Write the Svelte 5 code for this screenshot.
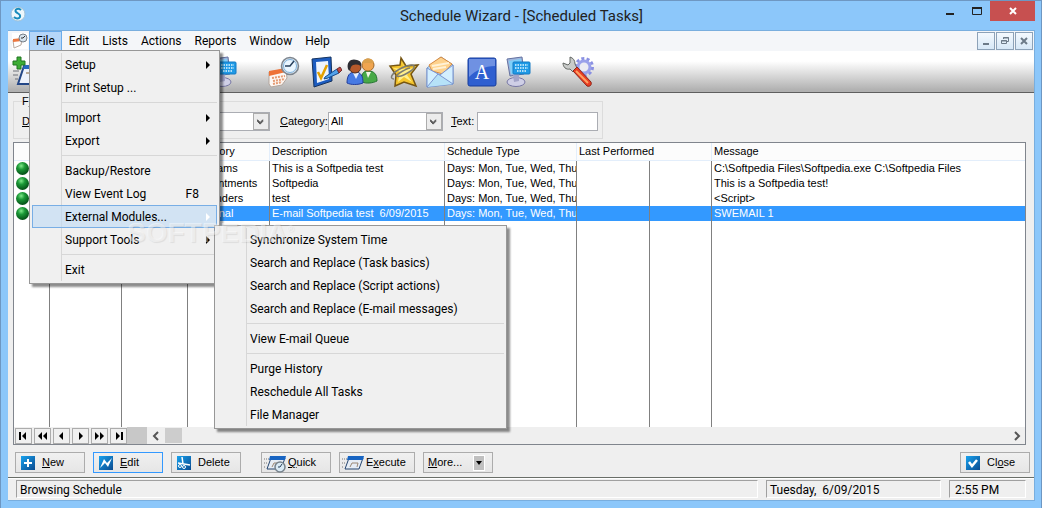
<script lang="ts">
  type MenuEntry = { label?: string; shortcut?: string; arrow?: boolean; open?: boolean; separator?: boolean };

  const menus = ['File', 'Edit', 'Lists', 'Actions', 'Reports', 'Window', 'Help'];

  const fileMenu: MenuEntry[] = [
    { label: 'Setup', arrow: true },
    { label: 'Print Setup ...' },
    { separator: true },
    { label: 'Import', arrow: true },
    { label: 'Export', arrow: true },
    { separator: true },
    { label: 'Backup/Restore' },
    { label: 'View Event Log', shortcut: 'F8' },
    { label: 'External Modules...', arrow: true, open: true },
    { label: 'Support Tools', arrow: true },
    { separator: true },
    { label: 'Exit' }
  ];

  const modulesMenu: MenuEntry[] = [
    { label: 'Synchronize System Time' },
    { label: 'Search and Replace (Task basics)' },
    { label: 'Search and Replace (Script actions)' },
    { label: 'Search and Replace (E-mail messages)' },
    { separator: true },
    { label: 'View E-mail Queue' },
    { separator: true },
    { label: 'Purge History' },
    { label: 'Reschedule All Tasks' },
    { label: 'File Manager' }
  ];

  const days = 'Days: Mon, Tue, Wed, Thu';
  const tasks = [
    { category: 'Programs', description: 'This is a Softpedia test', message: 'C:\\Softpedia Files\\Softpedia.exe C:\\Softpedia Files' },
    { category: 'Appointments', description: 'Softpedia', message: 'This is a Softpedia test!' },
    { category: 'Reminders', description: 'test', message: '<Script>' },
    { category: 'Personal', description: 'E-mail Softpedia test  6/09/2015', message: 'SWEMAIL 1' }
  ];

  // pairs of toolbar buttons, left to right
  const toolGroups = [['calendar'], ['check', 'people'], ['star', 'mail'], ['font', 'monitor']];

  const navPaths = [
    'M3 3h2v8H3zM10 3v8L6 7z',
    'M7 3v8L3 7zM12 3v8L8 7z',
    'M9 3v8L5 7z',
    'M6 3v8l4-4z',
    'M3 3v8l4-4zM8 3v8l4-4z',
    'M5 3v8l4-4zM10 3h2v8h-2z'
  ];

  let selected = $state(3);
  let category = $state('All');
  let text = $state('');
</script>

{#snippet icon(name: string)}
  <svg class="icon" viewBox="0 0 32 32" aria-hidden="true">
    {#if name === 'calendar'}
      <path d="M1 16l17-3 1 9-5 7-11 2-2-3z" fill="#fdf8f4" stroke="#b3a59c" />
      <path d="M1 15l17-3v4L1 20z" fill="#ee7338" />
      <path d="M4 22l13-2M5 25l12-2M5 28l9-2" stroke="#e59a72" stroke-width="2" stroke-dasharray="2 1" />
      <circle cx="22" cy="10" r="8.500" fill="#d5e0ea" stroke="#7d858e" stroke-width="1.500" />
      <circle cx="22" cy="10" r="6.500" fill="#eaf6ff" stroke="#7fb2dc" />
      <path d="M26 5l-4 5h-5" fill="none" stroke="#28405c" stroke-width="1.500" />
    {:else if name === 'check'}
      <path d="M2 3l19-2 1 24L4 31z" fill="#1c5cc0" stroke="#14325e" />
      <path d="M6 6l12-1 1 18L7 27z" fill="#eef4fd" />
      <path d="M8 16l3 6 6-13" fill="none" stroke="#e4a100" stroke-width="2.500" />
      <path d="M15 21l12-8 2 4-11 5-4 1z" fill="#53a2ea" stroke="#164a8e" />
      <path d="M27 13l3-2 2 3-3 3z" fill="#c84640" stroke="#71302e" />
    {:else if name === 'people'}
      <path d="M16 26c-1-8 1-11 6-11 6 0 9 3 9 10-4 2-10 3-15 1z" fill="#47a947" stroke="#257432" />
      <path d="M20 16l2 6 3-6z" fill="#f1f7e8" />
      <circle cx="22" cy="9" r="6" fill="#f0a550" stroke="#a0682c" />
      <path d="M16 8c1-7 11-7 12-1-4 1-8-1-12 1z" fill="#dba04c" />
      <path d="M1 27c0-8 3-11 8-11 6 0 8 4 8 11-5 2-12 2-16 0z" fill="#477ae3" stroke="#243e9b" />
      <path d="M7 17l3 6 3-6z" fill="#e6efff" />
      <circle cx="9" cy="11" r="6" fill="#b4592b" stroke="#54311f" />
      <path d="M2 13C0 5 6 2 11 4c4 1 5 4 4 6-4-2-8-2-10 1-1 3-1 5-3 2z" fill="#2c2c31" />
    {:else if name === 'star'}
      <path d="M13 2l5 8 12-1-7 9 5 12-12-4-9 4 1-11-6-9 10-1z" fill="#f5c52e" stroke="#765614" stroke-width="1.500" />
      <path d="M14 5l2 8-11-1 7 4-2 10 6-5 8 5-5-7 6-7-8 2z" fill="#fff08c" />
      <path d="M6 23c-5 0-2-6 4-9 5-3 14-7 16-4 2 4-15 12-17 10-1-2 11-8 13-8" fill="none" stroke="#7c7c72" stroke-width="1.500" />
    {:else if name === 'mail'}
      <path d="M3 12L17 1l12 8v19L3 31z" fill="#c4e4f9" stroke="#7198c3" />
      <path d="M5 9L17 1l11 7-9 10L8 15z" fill="#fed28d" stroke="#d68a42" />
      <path d="M8 10l17-3M9 13l13-2" stroke="#fff1d5" stroke-width="2" />
      <path d="M3 12l13 7 13-10v19L3 31z" fill="#d3efff" stroke="#7b93d0" />
      <path d="M3 31l11-13 15 10" fill="#b6e2f8" stroke="#7b93d0" />
    {:else if name === 'font'}
      <rect x="2" y="2" width="28" height="28" rx="2" fill="#2f5fd0" stroke="#163d9c" />
      <path d="M3 3h26v7C19 10 10 14 3 21z" fill="#6f91e2" />
      <text x="16" y="23" text-anchor="middle" font-family="Liberation Serif, serif" font-size="20" fill="#fff">A</text>
    {:else if name === 'monitor'}
      <path d="M5 3l15-2 2 17L8 20z" fill="#9fb6dd" stroke="#64719f" />
      <path d="M7 5l12-2 1 13-11 2z" fill="#7fd0f9" />
      <ellipse cx="14" cy="26" rx="9" ry="4.500" fill="#cfcfe6" stroke="#7777a4" />
      <path d="M11 19l6-1v7l-5 1z" fill="#a3a4c8" />
      <rect x="11" y="6" width="17" height="12" rx="1" fill="#1f9ae6" stroke="#147ac3" />
      <path d="M13 9h13M13 12h13M15 15h9" stroke="#dff6ff" stroke-width="1.500" stroke-dasharray="1.500 1" />
    {:else if name === 'tools'}
      <circle cx="22" cy="11" r="8.500" fill="none" stroke="#8a90e2" stroke-width="3" stroke-dasharray="3 2.300" />
      <circle cx="22" cy="11" r="6" fill="#ececf2" stroke="#9aa1ea" stroke-width="3" />
      <path d="M8 1v6l-2 2-5-2c0 4 3 7 7 6l3 3 4-4-2-4c0-4-2-6-5-7z" fill="#c9cbc9" stroke="#646865" />
      <path d="M11 15l4-4 14 15c1 3-1 5-4 4z" fill="#eb3e22" stroke="#8c251b" />
      <path d="M14 15l12 12" stroke="#ffa264" stroke-width="2" />
    {:else if name === 'add'}
      <path d="M12 10h20v18H6z" fill="#eef2fb" stroke="#244787" stroke-width="2" />
      <path d="M12 9h20v4H11z" fill="#2767bc" />
      <path d="M1 15h6M1 19h5M3 23h3" stroke="#6c7078" />
      <path d="M14 17h9l-2 6" fill="none" stroke="#b9aa9a" stroke-width="2" />
      <path d="M5 1h4v4h4v4H9v4H5V9H1V5h4z" fill="#3dad35" stroke="#217523" />
    {/if}
  </svg>
{/snippet}

{#snippet dialog(clock: boolean)}
  <svg class="dialog-icon" viewBox="0 0 24 20" aria-hidden="true">
    <path d="M1 6h5M1 10h4M1 14h2" stroke="#777" stroke-dasharray="1 1" />
    <path d="M8 5h14l-4 11H4z" fill="#e6edf5" stroke="#24446f" />
    <path d="M7 3h16l-1 4H6z" fill="#1764c2" />
    <path d="M9 14l2-4h6l-1 4" fill="none" stroke="#9b8874" />
    {#if clock}
      <circle cx="17" cy="14" r="5" fill="#d9eaf5" stroke="#77838c" stroke-width="1.500" />
      <path d="M19 11l-2 3h-2" fill="none" stroke="#263e58" />
    {/if}
  </svg>
{/snippet}

{#snippet menuList(entries: MenuEntry[], name: string)}
  <ul class="menu" role="menu" aria-label={name}>
    {#each entries as entry}
      {#if entry.separator}
        <li class="separator" role="separator"></li>
      {:else}
        <li class="entry" role="none">
          <button class="menu-item" class:open={entry.open} role="menuitem">
            <span>{entry.label}</span>
            {#if entry.shortcut}<span class="shortcut">{entry.shortcut}</span>{/if}
            {#if entry.arrow}
              <svg class="arrow" viewBox="0 0 4 8" aria-hidden="true"><path d="M0 0l4 4-4 4z" fill="currentColor" /></svg>
            {/if}
          </button>
          {#if entry.open}
            <div class="submenu">{@render menuList(modulesMenu, 'External Modules')}</div>
          {/if}
        </li>
      {/if}
    {/each}
  </ul>
{/snippet}

<div class="window">
  <header class="titlebar">
    <svg class="logo" viewBox="0 0 16 16" aria-hidden="true">
      <circle cx="8" cy="8" r="7" fill="#edf7fc" stroke="#a2c2d7" />
      <path d="M11 4C8 1 4 4 6 6c2 2 5 2 4 5-1 2-4 2-6 0" fill="none" stroke="#178bbd" stroke-width="2" />
    </svg>
    <h1>Schedule Wizard - [Scheduled Tasks]</h1>
    <div class="caption-buttons">
      <button class="caption" aria-label="Minimize"><svg viewBox="0 0 12 10"><path d="M2 7h8v2H2z" fill="#222" /></svg></button>
      <button class="caption" aria-label="Maximize"><svg viewBox="0 0 12 10"><path d="M1.500 1.500h9v7h-9z" fill="none" stroke="#222" /><path d="M1 1h10v2H1z" fill="#222" /></svg></button>
      <button class="caption close" aria-label="Close window"><svg viewBox="0 0 12 10"><path d="M3 2l6 6M9 2L3 8" stroke="#fff" stroke-width="2" /></svg></button>
    </div>
  </header>

  <div class="client">
    <nav class="menubar">
      <svg class="doc-icon" viewBox="0 0 16 16" aria-hidden="true">
        <path d="M1 7l9-1-1 6-7 3z" fill="#fff" stroke="#b8a9a0" />
        <path d="M1 6l9-1v3l-9 1z" fill="#ec7840" />
        <circle cx="11" cy="5" r="4" fill="#d5e2ec" stroke="#777f88" />
        <path d="M13 3l-2 2H9" fill="none" stroke="#333" />
      </svg>
      {#each menus as menu}
        {#if menu === 'File'}
          <div class="menu-root">
            <button class="menu-title active" aria-expanded="true">{menu}</button>
            <div class="dropdown">{@render menuList(fileMenu, 'File')}</div>
          </div>
        {:else}
          <button class="menu-title">{menu}</button>
        {/if}
      {/each}
      <div class="mdi-buttons">
        <button aria-label="Minimize document"><svg viewBox="0 0 16 16"><path d="M5 10h6v2H5z" fill="#6c7a88" /></svg></button>
        <button aria-label="Restore document"><svg viewBox="0 0 16 16"><path d="M6.500 6V4.500h5v4H10M4.500 7.500h5v3h-5zM6 5h6M4 8h6" fill="none" stroke="#6c7a88" /></svg></button>
        <button aria-label="Close document"><svg viewBox="0 0 16 16"><path d="M5 5l6 6M11 5l-6 6" stroke="#6c7a88" stroke-width="2" /></svg></button>
      </div>
    </nav>

    <div class="toolbar" role="toolbar" aria-label="Tools">
      <div class="tool-pair wide">
        <button class="tool" aria-label="Add task">{@render icon('add')}</button>
        <button class="tool" aria-label="Remote computer">{@render icon('monitor')}</button>
      </div>
      <div class="tool-groups">
        {#each toolGroups as group}
          <div class="tool-pair">
            {#each group as tool}
              <button class="tool" aria-label={tool}>{@render icon(tool)}</button>
            {/each}
          </div>
        {/each}
      </div>
      <button class="tool" aria-label="tools">{@render icon('tools')}</button>
    </div>

    <form class="filter">
      <fieldset>
        <legend>F<u>i</u>lter</legend>
        <label for="date"><u>D</u>ate:</label>
        <span class="select date">
          <select id="date"><option value=""></option></select>
          <svg viewBox="0 0 16 16" aria-hidden="true"><path d="M4 6l3 3 3-3v2l-3 3-3-3z" fill="#555" stroke="#555" /></svg>
        </span>
        <label class="category-label" for="category"><u>C</u>ategory:</label>
        <span class="select">
          <select id="category" bind:value={category}><option>All</option></select>
          <svg viewBox="0 0 16 16" aria-hidden="true"><path d="M4 6l3 3 3-3v2l-3 3-3-3z" fill="#555" stroke="#555" /></svg>
        </span>
        <label class="text-label" for="text"><u>T</u>ext:</label>
        <input id="text" type="text" bind:value={text} />
      </fieldset>
    </form>

    <main class="browser">
      <table>
        <colgroup>
          <col class="c-icon" /><col class="c-date" /><col class="c-time" /><col class="c-category" /><col class="c-description" />
          <col class="c-type" /><col class="c-last" /><col class="c-last-time" /><col />
        </colgroup>
        <thead>
          <tr>
            <th></th>
            <th></th>
            <th></th>
            <th>Category</th>
            <th>Description</th>
            <th>Schedule Type</th>
            <th colspan="2">Last Performed</th>
            <th>Message</th>
          </tr>
        </thead>
        <tbody>
          {#each tasks as task, i}
            <tr class:selected={i === selected} onclick={() => (selected = i)}>
              <td class="status"><i class="ball"></i></td>
              <td></td>
              <td></td>
              <td>{task.category}</td>
              <td>{task.description}</td>
              <td>{days}</td>
              <td></td>
              <td></td>
              <td>{task.message}</td>
            </tr>
          {/each}
          <tr class="filler">
            {#each { length: 9 } as _}<td></td>{/each}
          </tr>
        </tbody>
      </table>
      <div class="navigator">
        {#each navPaths as d, i}
          <button aria-label={`Record navigation ${i + 1}`}><svg viewBox="0 0 15 14"><path {d} fill="#000" /></svg></button>
        {/each}
        <div class="nav-gap"></div>
        <div class="scrollbar">
          <svg viewBox="0 0 16 16"><path d="M9 4L5 8l4 4" fill="none" stroke="#555" stroke-width="2" /></svg>
          <div class="thumb"></div>
          <svg class="right" viewBox="0 0 16 16"><path d="M6 4l4 4-4 4" fill="none" stroke="#555" stroke-width="2" /></svg>
        </div>
      </div>
    </main>

    <div class="actions">
      <button class="action">
        <svg class="square" viewBox="0 0 14 14"><path d="M7 3v8M3 7h8" stroke="#fff" stroke-width="2" /></svg>
        <span><u>N</u>ew</span>
      </button>
      <button class="action default">
        <svg class="square" viewBox="0 0 14 14"><path d="M1 12l4-9 3 4 5-5-4 9-3-4z" fill="#fff" /></svg>
        <span><u>E</u>dit</span>
      </button>
      <button class="action">
        <svg class="square" viewBox="0 0 14 14"><path d="M5 1l1 7M1 7l12 2" stroke="#fff" stroke-width="1.500" /><circle cx="3" cy="10" r="1.500" fill="none" stroke="#fff" /><circle cx="7" cy="11" r="1.500" fill="none" stroke="#fff" /></svg>
        <span>Delete</span>
      </button>
      <button class="action picture second">{@render dialog(true)}<span><u>Q</u>uick</span></button>
      <button class="action picture execute">{@render dialog(false)}<span>E<u>x</u>ecute</span></button>
      <button class="action more">
        <span><u>M</u>ore...</span>
        <svg class="drop" viewBox="0 0 10 14"><path d="M2 5h6L5 9z" fill="#000" /></svg>
      </button>
      <button class="action last">
        <svg class="square" viewBox="0 0 14 14"><path d="M3 6l3 4 5-6" fill="none" stroke="#fff" stroke-width="2.500" /></svg>
        <span>Cl<u>o</u>se</span>
      </button>
    </div>

    <footer class="statusbar">
      <span class="panel message">Browsing Schedule</span>
      <span class="panel date-panel">Tuesday,&nbsp; 6/09/2015</span>
      <span class="panel time-panel">2:55 PM</span>
    </footer>
  </div>

  <div class="watermark" aria-hidden="true">SOFTPEDIA<sup>®</sup></div>
</div>

<style>
  :global(body) {
    margin: 0;
  }

  .window {
    --ui: Roboto, 'Open Sans', sans-serif;
    --small: 'Liberation Sans', Arial, sans-serif;
    position: relative;
    display: flex;
    flex-direction: column;
    box-sizing: border-box;
    min-height: 100vh;
    padding: 0 6px 7px 7px;
    border: 1px solid #6e97c2;
    border-bottom-width: 0;
    background: #8cc7fa;
    color: #000;
    font: 11px/15px var(--small);
  }

  button {
    margin: 0;
    padding: 0;
    border: 0;
    background: none;
    color: inherit;
    font: inherit;
  }

  svg {
    display: block;
  }

  /* title bar */
  .titlebar {
    display: grid;
    grid-template-columns: 1fr auto 1fr;
    align-items: start;
    height: 29px;
  }

  .logo {
    width: 16px;
    height: 16px;
    margin: 5px 0 0 2px;
  }

  h1 {
    margin: 4px 0 0;
    color: #222;
    font: 400 15px/22px var(--ui);
  }

  .caption-buttons {
    display: flex;
    justify-content: flex-end;
  }

  .caption {
    display: grid;
    place-items: center;
    width: 27px;
    height: 20px;
  }

  .caption svg {
    width: 12px;
    height: 10px;
  }

  .caption.close {
    width: 45px;
    background: #c75050;
  }

  .client {
    display: flex;
    flex: 1;
    flex-direction: column;
    border: 1px solid #79aede;
    border-left-width: 0;
    background: #efefef;
  }

  /* menus */
  .menubar {
    display: flex;
    align-items: center;
    height: 20px;
    padding: 0 1px 0 4px;
    background: #f4f6f9;
    font: 12px/20px var(--ui);
  }

  .doc-icon {
    width: 16px;
    height: 16px;
    margin-right: 1px;
    background: #fff;
  }

  .menu-root {
    position: relative;
  }

  .menu-title {
    padding: 0 6px 0 7px;
    height: 20px;
    line-height: 20px;
  }

  .menu-title.active {
    padding: 0 6px;
    border: 1px solid #6aaceb;
    background: #b5d6f8;
    line-height: 18px;
  }

  .dropdown {
    position: absolute;
    top: 19px;
    left: 0;
    z-index: 5;
    width: 191px;
  }

  .submenu {
    position: absolute;
    top: 20px;
    left: 182px;
    z-index: 1;
    width: 293px;
  }

  .menu {
    margin: 0;
    padding: 2px;
    border: 1px solid #979797;
    background: linear-gradient(to right, transparent 29px, #d7d7d7 29px 30px, transparent 30px) content-box, #f0f0f0;
    box-shadow: 3px 3px 2px rgba(0, 0, 0, 0.45);
    list-style: none;
  }

  .entry {
    position: relative;
  }

  .menu-item {
    display: flex;
    align-items: center;
    box-sizing: border-box;
    width: 100%;
    height: 23px;
    padding: 0 7px 0 33px;
    line-height: 23px;
    text-align: left;
    white-space: nowrap;
  }

  .menu-item span {
    padding-top: 1px;
  }

  .menu-item.open {
    padding: 0 6px 0 32px;
    border: 1px solid #78aee5;
    background: rgba(190, 218, 245, 0.6);
  }

  .shortcut {
    margin-left: auto;
    padding-right: 11px;
  }

  .arrow {
    width: 4px;
    height: 8px;
    margin-left: auto;
  }

  .open .arrow {
    color: #fff;
  }

  .separator {
    height: 1px;
    margin: 3px 0 3px 29px;
    background: #d7d7d7;
  }

  .mdi-buttons {
    display: flex;
    gap: 1px;
    margin-left: auto;
  }

  .mdi-buttons button {
    width: 18px;
    height: 18px;
    border: 1px solid #8da2b8;
    background: linear-gradient(#f4f9fe, #d7e8f7);
  }

  /* toolbar */
  .toolbar {
    display: flex;
    align-items: center;
    gap: 28px;
    height: 41px;
    padding-left: 4px;
    border-bottom: 1px solid #5f5f5f;
    background: linear-gradient(#fff 25%, #b1b1b1 95%);
  }

  .tool-groups {
    display: flex;
    gap: 10px;
  }

  .tool-pair {
    display: flex;
    gap: 4px;
  }

  .tool-pair.wide {
    justify-content: space-between;
    width: 228px;
  }

  .tool,
  .icon {
    width: 32px;
    height: 32px;
  }

  /* filter */
  .filter {
    display: flex;
    padding: 2px 5px 3px;
  }

  fieldset {
    display: flex;
    align-items: center;
    margin: 0;
    padding: 4px 4px 7px 8px;
    border: 1px solid #dcdcdc;
  }

  legend {
    padding: 0;
    line-height: 13px;
  }

  .select {
    position: relative;
    width: 115px;
  }

  .date {
    width: 120px;
    margin-left: 100px;
  }

  label[for='date'] {
    width: 28px;
  }

  select,
  input {
    display: block;
    box-sizing: border-box;
    width: 100%;
    height: 19px;
    margin: 0;
    padding: 0 2px;
    border: 1px solid #abadb3;
    border-radius: 0;
    background: #fff;
    color: #000;
    font: inherit;
    appearance: none;
    outline: 0;
  }

  .select svg {
    position: absolute;
    top: 1px;
    right: 1px;
    box-sizing: border-box;
    width: 16px;
    height: 17px;
    border: 1px solid #acacac;
    background: #ececec;
    pointer-events: none;
  }

  .category-label {
    width: 48px;
    margin-left: 10px;
  }

  .text-label {
    width: 26px;
    margin-left: 8px;
  }

  #text {
    width: 121px;
  }

  /* task list */
  .browser {
    display: flex;
    flex: 1;
    flex-direction: column;
    margin: 0 8px 0 5px;
    border: 1px solid #80858d;
    background: #fff;
  }

  table {
    flex: 1;
    width: 100%;
    table-layout: fixed;
    border-collapse: separate;
    border-spacing: 0;
  }

  .c-icon { width: 36px; }
  .c-date { width: 72px; }
  .c-time { width: 66px; }
  .c-category { width: 82px; }
  .c-description { width: 175px; }
  .c-type { width: 132px; }
  .c-last { width: 73px; }
  .c-last-time { width: 62px; }

  th,
  td {
    height: 15px;
    padding: 0 0 0 2px;
    border-right: 1px solid #808080;
    overflow: hidden;
    line-height: 15px;
    text-align: left;
    white-space: pre;
  }

  th {
    height: 17px;
    border-right-color: #e3eefb;
    border-bottom: 1px solid #e3eefb;
    background: #fcfcfc;
    font-weight: 400;
  }

  th:last-child,
  td:last-child {
    border-right: 0;
  }

  .selected td:not(.status) {
    background: #3399ff;
    color: #fff;
  }

  .filler td {
    height: auto;
  }

  .ball {
    display: block;
    width: 13px;
    height: 13px;
    border-radius: 50%;
    background: radial-gradient(circle at 40% 30%, #7fe88a, #1c9a38 30%, #06581a 70%, #022a0a);
  }

  .navigator {
    display: flex;
    gap: 2px;
    height: 17px;
    padding-left: 1px;
    background: #efefef;
  }

  .navigator button {
    width: 17px;
    height: 16px;
    margin-top: 1px;
    border: 1px solid #acacac;
    background: #f0f0f0;
  }

  .navigator button svg {
    width: 15px;
    height: 14px;
  }

  .nav-gap {
    width: 20px;
    margin-left: -2px;
    background: #c8c8c8;
  }

  .scrollbar {
    display: flex;
    flex: 1;
    align-items: center;
  }

  .scrollbar svg {
    width: 16px;
    height: 16px;
  }

  .scrollbar .right {
    margin-left: auto;
  }

  .thumb {
    width: 17px;
    height: 15px;
    background: #cdcdcd;
  }

  /* bottom buttons */
  .actions {
    display: flex;
    gap: 8px;
    padding: 7px 4px 4px 7px;
  }

  .action {
    display: flex;
    align-items: center;
    box-sizing: border-box;
    width: 70px;
    height: 21px;
    padding: 0 5px;
    gap: 7px;
    border: 1px solid #acacac;
    background: linear-gradient(#f0f0f0, #e6e6e6);
  }

  .default {
    border-color: #3399ff;
  }

  .square {
    width: 14px;
    height: 14px;
    background: linear-gradient(135deg, #18a2ee, #0a4a8f);
  }

  .picture {
    gap: 1px;
    padding: 0 1px;
  }

  .dialog-icon {
    width: 24px;
    height: 20px;
  }

  .second {
    margin-left: 12px;
  }

  .execute {
    width: 76px;
  }

  .more {
    justify-content: space-between;
    padding: 0 7px 0 4px;
  }

  .drop {
    width: 10px;
    height: 14px;
    border: 1px solid #fff;
    background: #c0c0c0;
  }

  .last {
    margin-left: auto;
  }

  /* status bar */
  .statusbar {
    display: flex;
    gap: 8px;
    padding: 2px 8px 2px;
    border-top: 1px solid #696e68;
    box-shadow: inset 0 1px #fff;
    font: 12px/18px var(--ui);
  }

  .panel {
    box-sizing: border-box;
    height: 18px;
    padding: 0 3px;
    border: 1px solid #a0a0a0;
    border-right-color: #fff;
    border-bottom-color: #fff;
    white-space: nowrap;
  }

  .message {
    flex: 1;
  }

  .date-panel {
    width: 175px;
  }

  .time-panel {
    width: 77px;
    padding-left: 5px;
  }

  .watermark {
    position: absolute;
    top: 214px;
    left: 126px;
    z-index: 10;
    color: rgba(255, 255, 255, 0.45);
    font: 700 28px/36px var(--small);
    text-shadow: 1px 1px 1px rgba(0, 0, 0, 0.08);
    pointer-events: none;
  }

  .watermark sup {
    font-size: 9px;
    line-height: 9px;
    vertical-align: 10px;
  }
</style>
